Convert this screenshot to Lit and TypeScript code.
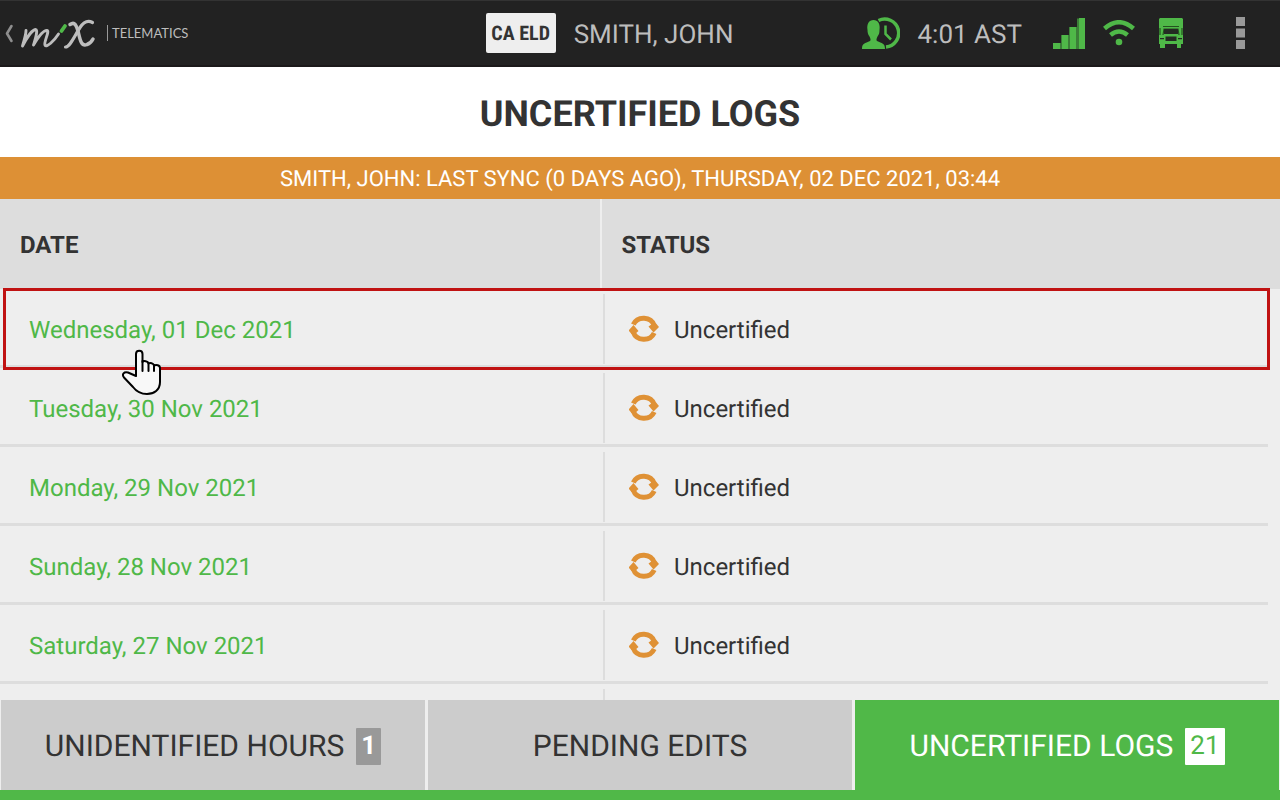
import { LitElement, html, css, svg, nothing } from "lit";
import { customElement, property } from "lit/decorators.js";

interface LogEntry {
  date: string;
  status: string;
}

const LOGS: LogEntry[] = [
  { date: "Wednesday, 01 Dec 2021", status: "Uncertified" },
  { date: "Tuesday, 30 Nov 2021", status: "Uncertified" },
  { date: "Monday, 29 Nov 2021", status: "Uncertified" },
  { date: "Sunday, 28 Nov 2021", status: "Uncertified" },
  { date: "Saturday, 27 Nov 2021", status: "Uncertified" },
];

@customElement("status-bar")
export class StatusBar extends LitElement {
  static styles = css`
    :host {
      display: grid;
      grid-template-columns: 47fr auto 53fr;
      align-items: center;
      height: 67px;
      box-sizing: border-box;
      border-top: 1px solid #333;
      border-bottom: 2px solid #1b191a;
      background: #222;
      color: #bdbdbd;
      font-size: 26px;
      line-height: 32px;
    }
    svg {
      display: block;
      flex: none;
    }
    .brand {
      display: flex;
      align-items: center;
      width: max-content;
      padding: 0 0 0 4px;
      border: 0;
      background: none;
      color: inherit;
      cursor: pointer;
    }
    .word {
      margin-left: 11px;
      padding-left: 4px;
      border-left: 1px solid #999;
      font: 13px/16px Lato, sans-serif;
    }
    .driver {
      display: flex;
      align-items: center;
      gap: 18px;
      padding-left: 1px;
    }
    .name,
    .clock {
      padding-top: 4px;
    }
    .mode {
      width: 70px;
      border-radius: 2px;
      background: #eee;
      color: #333;
      text-align: center;
      font: bold 20px/40px "Roboto Condensed", "Liberation Sans Narrow", Roboto, sans-serif;
    }
    .tray {
      display: flex;
      align-items: center;
      justify-content: flex-end;
      padding-right: 27px;
    }
    .clock {
      margin: 0 31px 0 18px;
    }
    .wifi {
      margin: 0 24px 0 18px;
    }
    .more {
      margin-left: 45px;
      padding: 0 8px;
      border: 0;
      background: none;
      cursor: pointer;
    }
  `;

  render() {
    return html`
      <button class="brand" aria-label="Back">
        <svg width="92" height="40" viewBox="0 0 92 40" fill="none" stroke-linecap="round" stroke-linejoin="round">
          <path d="M7.500 13L3 20.500L7.500 28" stroke="#8e8e8e" stroke-width="2.600" />
          <g stroke="#bdbdbd">
            <path d="M18.500 33C20 28 22 22 22 17.500C22 20 20 28 18.500 33C22 26 28 17 31.500 16.500C34.500 16.500 31 27 29.500 32C33 26 39 17 43 17.500C46 18 39.500 29 41 32C42.500 35 50 28 54.500 21" stroke-width="2.900" />
            <path d="M66 11.500C71 8 72.500 13 74 18C76 26 77 34 83 31.500C86 30.500 88 28 89 26" stroke-width="3.500" />
            <path d="M61.500 34C66 34 71 22 76 14.500C80 8.500 84 7 88.500 9.500" stroke-width="3.200" />
          </g>
          <path d="M57.500 18L61 13" stroke="#4fb848" stroke-width="3.800" />
        </svg>
        <span class="word">TELEMATICS</span>
      </button>

      <div class="driver">
        <span class="mode">CA ELD</span>
        <span class="name">SMITH, JOHN</span>
      </div>

      <div class="tray">
        <svg width="38" height="32" viewBox="0 0 38 32" fill="none">
          <path d="M16.500 3.500A14 14 0 1 1 24 30" stroke="#4fb848" stroke-width="3.500" />
          <path d="M23.500 8.500V17L29 22.500" stroke="#4fb848" stroke-width="2.500" />
          <path d="M0 32C0 26 3 26.500 8 24C9 23 8.500 21.500 7.500 19.500C6 17.500 5.500 15.500 5.500 13C4.500 7 7 3 11.500 3C16 3 18.500 7 17.500 13C17.500 16 17 17.500 15.500 19.500C14.500 21.500 14 23 15 24C20 26.500 23 26 23 32Z" fill="#4fb848" />
        </svg>
        <span class="clock">4:01 AST</span>
        <svg width="32" height="31" viewBox="0 0 32 31" fill="#4fb848">
          <path d="M0 25H8V17H16V9H24V0.500H32V31H0Z" fill="#3c7f38" />
          <path d="M0 25H7V31H0ZM9 17H15V31H9ZM17 9H23V31H17ZM26 0H32V31H26Z" />
        </svg>
        <svg class="wifi" width="32" height="26" viewBox="0 0 32 26" fill="none" stroke="#4fb848">
          <path d="M1.500 8.500Q16 -4 30.500 8.500" stroke-width="4.500" />
          <path d="M7.500 15Q16 8 24.500 15" stroke-width="4.500" />
          <circle cx="16" cy="22" r="3.300" fill="#4fb848" stroke="none" />
        </svg>
        <svg width="24" height="30" viewBox="0 0 24 30">
          <path d="M1 0H23L24 1V26H22V30H18V26H6V30H1V26H0V1Z" fill="#4fb848" />
          <path d="M4 8.500H20M4 17L5 11H19L20 17M1 10V17M23 10V17" fill="none" stroke="#24521f" stroke-width="1.200" />
          <path d="M5 11H19V16H5ZM6.500 18.500H17.500V23H6.500ZM1 20H5V21.200H1ZM19 20H23V21.200H19Z" fill="#242a23" />
        </svg>
        <button class="more" aria-label="More options">
          <svg width="9" height="32" viewBox="0 0 9 32" fill="#999">
            <path d="M0 0H9V9H0ZM0 11.500H9V20.500H0ZM0 23H9V32H0Z" />
          </svg>
        </button>
      </div>
    `;
  }
}

@customElement("log-table")
export class LogTable extends LitElement {
  @property({ attribute: false }) logs: LogEntry[] = [];

  static styles = css`
    :host {
      display: block;
      background: #eee;
    }
    table,
    thead,
    tbody {
      display: block;
    }
    tr {
      display: grid;
      grid-template-columns: 47fr 53fr;
    }
    th {
      box-sizing: border-box;
      padding: 31px 20px 29px;
      background: #ddd;
      text-align: left;
      font-size: 24px;
      line-height: 30px;
      font-weight: bold;
    }
    th:first-child {
      border-right: 2px solid #eee;
    }
    tbody {
      padding-right: 12px;
    }
    tbody tr {
      position: relative;
      grid-template-columns: 605fr 663fr;
      height: 79px;
      box-sizing: border-box;
      padding: 5px 0 1px;
      border-bottom: 3px solid #ddd;
      font-size: 24px;
      line-height: 30px;
    }
    td {
      display: flex;
      align-items: center;
      gap: 15px;
      box-sizing: border-box;
      height: 70px;
      padding: 0 24px;
    }
    td:first-child {
      padding-left: 29px;
      border-right: 2px solid #ddd;
    }
    a,
    .status {
      padding-top: 2px;
    }
    a {
      color: #4fb848;
      text-decoration: none;
    }
    .current {
      z-index: 1;
    }
    .current::after {
      content: "";
      position: absolute;
      top: -1px;
      left: 3px;
      right: -2px;
      height: 82px;
      box-sizing: border-box;
      border: 3px solid #c01212;
      pointer-events: none;
    }
    .pointer {
      position: absolute;
      z-index: 1;
      top: 60px;
      left: 121px;
      pointer-events: none;
    }
  `;

  private syncIcon() {
    return svg`
      <svg width="30" height="28" viewBox="0 0 30 28" aria-hidden="true">
        <g fill="none" stroke="#df9135" stroke-width="5">
          <path d="M4.300 9.500A11.300 10.800 0 0 1 25.300 10.500" />
          <path d="M25.200 18A11.300 10.800 0 0 1 4.200 17" />
        </g>
        <path d="M19.500 11.500L24.500 17.500L30 12L27 8.500L23 9ZM9.500 16L4.500 10L-0.500 15.500L2.500 19L6.500 18.500Z" fill="#df9135" />
      </svg>`;
  }

  private pointerIcon() {
    return svg`
      <svg class="pointer" width="42" height="48" viewBox="0 0 42 48" aria-hidden="true">
        <path
          d="M15 27V5C15 0.500 21.500 0.500 21.500 5V13C22.500 11.500 27 12 27.500 14.500C29 13.500 32.500 14 33 16.500C35 15.500 39 16 39 19V33C39 41 33 45 26 45C19 45 15 42 12 38L3 28.500C0.500 25 3 22.500 7 23.500Z"
          fill="#f8f8f8"
          stroke="#000"
          stroke-width="2"
          stroke-linejoin="round"
        />
        <path d="M21.500 12V22M27.500 14V22M33 16V22" stroke="#000" stroke-width="2" stroke-linecap="round" />
      </svg>`;
  }

  render() {
    return html`
      <table>
        <thead>
          <tr>
            <th scope="col">DATE</th>
            <th scope="col">STATUS</th>
          </tr>
        </thead>
        <tbody>
          ${this.logs.map(
            (log, i) => html`<tr class=${i === 0 ? "current" : nothing}>
              <td><a href="#">${log.date}</a>${i === 0 ? this.pointerIcon() : nothing}</td>
              <td>${this.syncIcon()}<span class="status">${log.status}</span></td>
            </tr>`
          )}
          <tr>
            <td></td>
            <td></td>
          </tr>
        </tbody>
      </table>
    `;
  }
}

@customElement("app-root")
export class AppRoot extends LitElement {
  static styles = css`
    :host {
      display: flex;
      flex-direction: column;
      height: 100vh;
      overflow: hidden;
      background: #fff;
      color: #333;
      font-family: Roboto, sans-serif;
      text-rendering: geometricPrecision;
    }
    status-bar,
    h1,
    .sync,
    nav {
      flex: none;
    }
    h1 {
      margin: 0;
      padding: 26px 0 22px;
      text-align: center;
      font-size: 36px;
      line-height: 42px;
      font-weight: bold;
    }
    .sync {
      padding: 9px 0 5px;
      background: #dd9035;
      color: #fff;
      text-align: center;
      font-size: 22px;
      line-height: 28px;
    }
    log-table {
      flex: 1;
      min-height: 0;
      overflow: hidden;
    }
    nav {
      display: grid;
      grid-template-columns: repeat(3, 1fr);
      gap: 3px;
      padding: 0 1px;
      border-bottom: 10px solid #50b848;
      background: #eee;
    }
    .tab {
      display: flex;
      align-items: center;
      justify-content: center;
      gap: 12px;
      height: 90px;
      padding: 2px 0 0;
      border: 0;
      background: #ccc;
      color: #333;
      font: 30px/36px Roboto, sans-serif;
      text-rendering: inherit;
      cursor: pointer;
    }
    .label {
      padding-top: 2px;
    }
    .active {
      background: #50b848;
      color: #fff;
    }
    .count {
      padding: 0 5px;
      border-radius: 1px;
      background: #999;
      color: #fff;
      font-size: 26px;
      line-height: 37px;
      font-weight: bold;
    }
    .active .count {
      background: #fff;
      color: #50b848;
      font-weight: normal;
    }
  `;

  render() {
    return html`
      <status-bar></status-bar>
      <h1>UNCERTIFIED LOGS</h1>
      <div class="sync">SMITH, JOHN: LAST SYNC (0 DAYS AGO), THURSDAY, 02 DEC 2021, 03:44</div>
      <log-table .logs=${LOGS}></log-table>
      <nav>
        <button class="tab"><span class="label">UNIDENTIFIED HOURS</span><span class="count">1</span></button>
        <button class="tab"><span class="label">PENDING EDITS</span></button>
        <button class="tab active"><span class="label">UNCERTIFIED LOGS</span><span class="count">21</span></button>
      </nav>
    `;
  }
}
